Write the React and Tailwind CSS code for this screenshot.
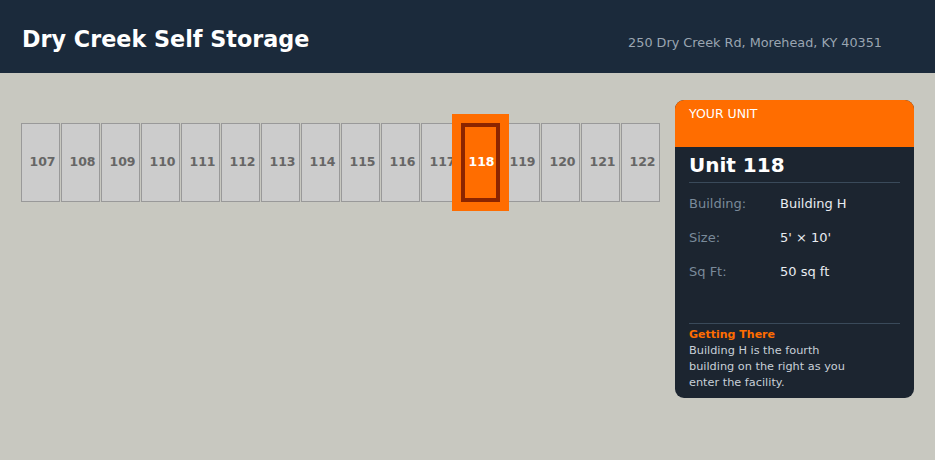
import React from "react";

const units = [107,108,109,110,111,112,113,114,115,116,117,118,119,120,121,122];

export default function App() {
  return (
    <div className="w-[935px] h-[460px] bg-[#c8c8c0] overflow-hidden" style={{fontFamily: '"DejaVu Sans", sans-serif'}}>
      <header className="h-[73px] bg-[#1b2a3b] flex items-center justify-between pl-[22px] pr-[53px] pt-[5px]">
        <h1 className="text-[22.3px] font-bold text-white leading-none">Dry Creek Self Storage</h1>
        <div className="text-[12.8px] text-[#9aa5b1] mt-[7px]">250 Dry Creek Rd, Morehead, KY 40351</div>
      </header>
      <main className="flex justify-between px-[21px] pt-[27px]">
        <div className="pt-[23px] flex gap-[1px]">
          {units.map((u) => {
            const sel = u === 118;
            return sel ? (
              <div key={u} className="relative z-10 w-[39px] h-[79px] bg-[#ff6d00] border-[4px] border-[#8b2500] shadow-[0_0_0_9px_#ff6d00] flex items-center justify-center text-[12.5px] font-bold text-white pl-[2px]">
                {u}
              </div>
            ) : (
              <div key={u} className="w-[39px] h-[79px] bg-[#cccccc] border border-[#999999] flex items-center justify-center text-[12.5px] font-bold text-[#666666] pl-[4px]">
                {u}
              </div>
            );
          })}
        </div>
        <aside className="w-[239px] h-[298px] rounded-[9px] overflow-hidden bg-[#1c2530] flex flex-col">
          <div className="h-[47px] bg-[#ff6d00] px-[14px] pt-[6px] text-[12.5px] text-white leading-[16px]">YOUR UNIT</div>
          <div className="px-[14px] flex-1 flex flex-col">
            <div className="text-[20px] font-bold text-white leading-[24px] mt-[6px] pb-[5px] border-b border-[#3a4a5a]">Unit 118</div>
            <div className="mt-[4px] text-[13px]">
              <div className="flex h-[34px] items-center"><span className="w-[91px] text-[#7a8a9a]">Building:</span><span className="text-[#e8ecf0]">Building H</span></div>
              <div className="flex h-[34px] items-center"><span className="w-[91px] text-[#7a8a9a]">Size:</span><span className="text-[#e8ecf0]">5' × 10'</span></div>
              <div className="flex h-[34px] items-center"><span className="w-[91px] text-[#7a8a9a]">Sq Ft:</span><span className="text-[#e8ecf0]">50 sq ft</span></div>
            </div>
            <div className="mt-[34px] border-t border-[#3a4a5a] pt-[3px]">
              <div className="text-[11px] font-bold text-[#ff6d00] leading-[16px]">Getting There</div>
              <div className="text-[11.3px] text-[#c8d0d8] leading-[16px] w-[175px]">Building H is the fourth building on the right as you enter the facility.</div>
            </div>
          </div>
        </aside>
      </main>
    </div>
  );
}
